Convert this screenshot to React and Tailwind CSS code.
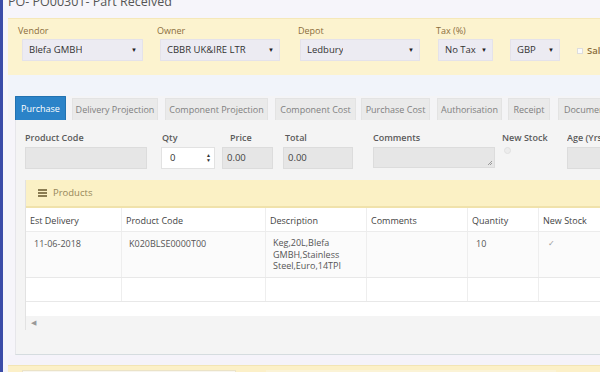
import React from "react";

function Sel({ w, text, cls = "" }) {
  return (
    <div className={`h-[22px] bg-[#ecebf2] border border-[#e4e2ea] flex items-center justify-between pl-[6px] pr-[5px] text-[9.5px] text-[#333] shrink-0 ${cls}`} style={{ width: w }}>
      <span className="truncate">{text}</span>
      <span className="text-[6px] text-[#222]">▼</span>
    </div>
  );
}

function Tab({ children, w, active, cls = "" }) {
  return active ? (
    <div className={`h-[24px] shrink-0 bg-[#2b83c8] text-white text-[9px] flex items-center justify-center rounded-t-[1px] border border-[#2272b0] border-b-0 ${cls}`} style={{ width: w }}>
      {children}
    </div>
  ) : (
    <div className={`h-[22px] shrink-0 bg-[#eaeaea] text-[#808080] text-[9px] flex items-center justify-center border border-[#e3e3e3] border-b-0 whitespace-nowrap ${cls}`} style={{ width: w }}>
      {children}
    </div>
  );
}

export default function App() {
  const cols = [96, 144, 101, 101, 71, 80];
  return (
    <div className="w-[600px] h-[372px] overflow-hidden flex bg-[#f6f5fa]" style={{ fontFamily: '"Open Sans", sans-serif' }}>
      <div className="w-[3px] bg-[#3b4ca8] shrink-0" />
      <div className="flex-1 flex flex-col pl-[5px] min-w-0 overflow-hidden">
        <div className="h-[11px] flex items-end overflow-hidden shrink-0">
          <div className="text-[12.5px] leading-[15px] text-[#555] whitespace-nowrap mb-[2px]">PO- PO00301- Part Received</div>
        </div>
        <div className="h-[7px] shrink-0" />
        {/* yellow filter panel */}
        <div className="h-[57px] bg-[#fcf3cf] border-t border-[#f5e8b8] flex pt-[5px] pl-[10px] shrink-0">
          <div className="w-[141px] shrink-0 flex flex-col">
            <div className="text-[9px] text-[#8b6d3c] leading-[13px]">Vendor</div>
            <Sel w={121} text="Blefa GMBH" cls="ml-[4px] mt-[2px]" />
          </div>
          <div className="w-[141px] shrink-0 flex flex-col">
            <div className="text-[9px] text-[#8b6d3c] leading-[13px] -ml-[2px]">Owner</div>
            <Sel w={120} text="CBBR UK&IRE LTR" cls="ml-[1px] mt-[2px]" />
          </div>
          <div className="w-[138px] shrink-0 flex flex-col">
            <div className="text-[9px] text-[#8b6d3c] leading-[13px] -ml-[2px]">Depot</div>
            <Sel w={120} text="Ledbury" cls="mt-[2px]" />
          </div>
          <div className="w-[72px] shrink-0 flex flex-col">
            <div className="text-[9px] text-[#8b6d3c] leading-[13px] -ml-[2px]">Tax (%)</div>
            <Sel w={55} text="No Tax" cls="mt-[2px]" />
          </div>
          <div className="w-[67px] shrink-0 flex flex-col">
            <div className="h-[13px]" />
            <Sel w={50} text="GBP" cls="mt-[2px]" />
          </div>
          <div className="flex items-center h-[42px] pt-[12px] gap-[4px] shrink-0">
            <div className="w-[6px] h-[6px] border border-[#ddd] bg-[#fbfbfb]" />
            <span className="text-[9.5px] text-[#8b6d3c] font-semibold">Sales</span>
          </div>
        </div>
        <div className="h-[21px] bg-[#f1f4fa] shrink-0" />
        {/* tabs */}
        <div className="flex items-end pl-[7px] h-[24px] shrink-0 bg-[#f4f4f6]">
          <Tab w={51} active>Purchase</Tab>
          <Tab w={86} cls="ml-[6px]">Delivery Projection</Tab>
          <Tab w={103} cls="ml-[7px]">Component Projection</Tab>
          <Tab w={81} cls="ml-[7px]">Component Cost</Tab>
          <Tab w={69} cls="ml-[5px]">Purchase Cost</Tab>
          <Tab w={65} cls="ml-[7px]">Authorisation</Tab>
          <Tab w={42} cls="ml-[6px]">Receipt</Tab>
          <Tab w={60} cls="ml-[8px]">Documents</Tab>
        </div>
        {/* tab content */}
        <div className="ml-[7px] h-[235px] bg-[#f4f4f4] border-l border-[#e6e6ea] border-b border-b-[#d5dcdf] flex flex-col shrink-0">
          <div className="flex pt-[11px] pl-[9px] h-[60px] shrink-0">
            <div className="w-[136px] shrink-0 flex flex-col">
              <div className="text-[9px] font-semibold text-[#5a5a5a] leading-[13px]">Product Code</div>
              <div className="mt-[3px] w-[122px] h-[22px] bg-[#e6e6e6] border border-[#dcdcdc]" />
            </div>
            <div className="w-[61px] shrink-0 flex flex-col">
              <div className="text-[9px] font-semibold text-[#5a5a5a] leading-[13px] pl-[1px]">Qty</div>
              <div className="mt-[3px] w-[54px] h-[22px] bg-white border border-[#e2e2e2] flex items-center justify-between pl-[8px] pr-[3px] text-[9.5px] text-[#333]">
                <span>0</span>
                <span className="flex flex-col text-[5px] leading-[5px] text-[#333]"><span>▲</span><span>▼</span></span>
              </div>
            </div>
            <div className="w-[61px] shrink-0 flex flex-col">
              <div className="text-[9px] font-semibold text-[#5a5a5a] leading-[13px] pl-[8px]">Price</div>
              <div className="mt-[3px] w-[51px] h-[22px] bg-[#e6e6e6] border border-[#dcdcdc] flex items-center pl-[4px] text-[9.5px] text-[#444]">0.00</div>
            </div>
            <div className="w-[90px] shrink-0 flex flex-col">
              <div className="text-[9px] font-semibold text-[#5a5a5a] leading-[13px] pl-[2px]">Total</div>
              <div className="mt-[3px] w-[70px] h-[22px] bg-[#e6e6e6] border border-[#dcdcdc] flex items-center pl-[4px] text-[9.5px] text-[#444]">0.00</div>
            </div>
            <div className="w-[129px] shrink-0 flex flex-col">
              <div className="text-[9px] font-semibold text-[#5a5a5a] leading-[13px]">Comments</div>
              <div className="mt-[3px] w-[122px] h-[21px] bg-[#e6e6e6] border border-[#dcdcdc] relative">
                <svg className="absolute right-[1px] bottom-[1px]" width="6" height="6" viewBox="0 0 6 6"><path d="M1 5L5 1M3 5L5 3" stroke="#888" strokeWidth="0.8" /></svg>
              </div>
            </div>
            <div className="w-[65px] shrink-0 flex flex-col">
              <div className="text-[9px] font-semibold text-[#5a5a5a] leading-[13px]">New Stock</div>
              <div className="mt-[3px] ml-[2px] w-[7px] h-[7px] rounded-full border border-[#e0e0e0] bg-[#ececec]" />
            </div>
            <div className="flex-1 flex flex-col min-w-0 overflow-hidden">
              <div className="text-[9px] font-semibold text-[#5a5a5a] leading-[13px] whitespace-nowrap">Age (Yrs)</div>
              <div className="mt-[3px] w-[60px] h-[22px] bg-[#e6e6e6] border border-[#dcdcdc] shrink-0" />
            </div>
          </div>
          {/* products panel */}
          <div className="ml-[9px] flex flex-col border-l border-[#e2e2e2] shrink-0">
            <div className="h-[28px] bg-[#fbf1c5] border-b-2 border-[#f0e2ab] flex items-center pl-[12px] gap-[6px]">
              <svg width="9" height="8" viewBox="0 0 9 8"><rect x="0" y="0" width="9" height="2" fill="#8a7c52" /><rect x="0" y="3" width="9" height="2" fill="#8a7c52" /><rect x="0" y="6" width="9" height="2" fill="#8a7c52" /></svg>
              <span className="text-[9.5px] text-[#958659]">Products</span>
            </div>
            <div className="bg-white flex flex-col">
              <div className="flex h-[24px] border-b border-[#ececec]">
                {["Est Delivery", "Product Code", "Description", "Comments", "Quantity", "New Stock"].map((h, i) => (
                  <div key={h} className={`shrink-0 flex items-center pl-[4px] pt-[2px] text-[9px] text-[#444] ${i < 5 ? "border-r border-[#eeeeee]" : ""}`} style={{ width: cols[i] }}>{h}</div>
                ))}
              </div>
              <div className="flex h-[46px] border-b border-[#e8e8e8] bg-[#fbfbfb]">
                <div className="shrink-0 pl-[8px] pt-[5px] text-[9px] text-[#555] border-r border-[#eeeeee]" style={{ width: cols[0] }}>11-06-2018</div>
                <div className="shrink-0 pl-[7px] pt-[5px] text-[9px] text-[#555] border-r border-[#eeeeee]" style={{ width: cols[1] }}>K020BLSE0000T00</div>
                <div className="shrink-0 pl-[7px] pr-[18px] pt-[5px] text-[9px] leading-[11.5px] text-[#555] border-r border-[#eeeeee]" style={{ width: cols[2] }}>Keg,20L,Blefa GMBH,Stainless Steel,Euro,14TPI</div>
                <div className="shrink-0 border-r border-[#eeeeee]" style={{ width: cols[3] }} />
                <div className="shrink-0 pl-[8px] pt-[5px] text-[9px] text-[#555] border-r border-[#eeeeee]" style={{ width: cols[4] }}>10</div>
                <div className="shrink-0 pl-[9px] pt-[5px] text-[8px] text-[#999]" style={{ width: cols[5] }}>✓</div>
              </div>
              <div className="flex h-[24px] border-b border-[#e8e8e8]">
                {cols.map((w, i) => (
                  <div key={i} className={`shrink-0 ${i < 5 ? "border-r border-[#eeeeee]" : ""}`} style={{ width: w }} />
                ))}
              </div>
              <div className="h-[14px]" />
            </div>
            <div className="h-[14px] flex items-center pl-[5px] text-[7px] text-[#999]">◀</div>
          </div>
        </div>
        <div className="h-[10px] bg-[#f5f3fa] shrink-0" />
        <div className="flex-1 bg-[#fcf0c8] border-t border-[#f3e5b5] flex pt-[4px] pl-[14px] gap-[30px]">
          <div className="w-[214px] h-[10px] bg-[#f8f6f0] border border-[#ebe3c8]" />
          <div className="w-[290px] h-[10px] bg-[#fbf3d6]" />
        </div>
      </div>
    </div>
  );
}
